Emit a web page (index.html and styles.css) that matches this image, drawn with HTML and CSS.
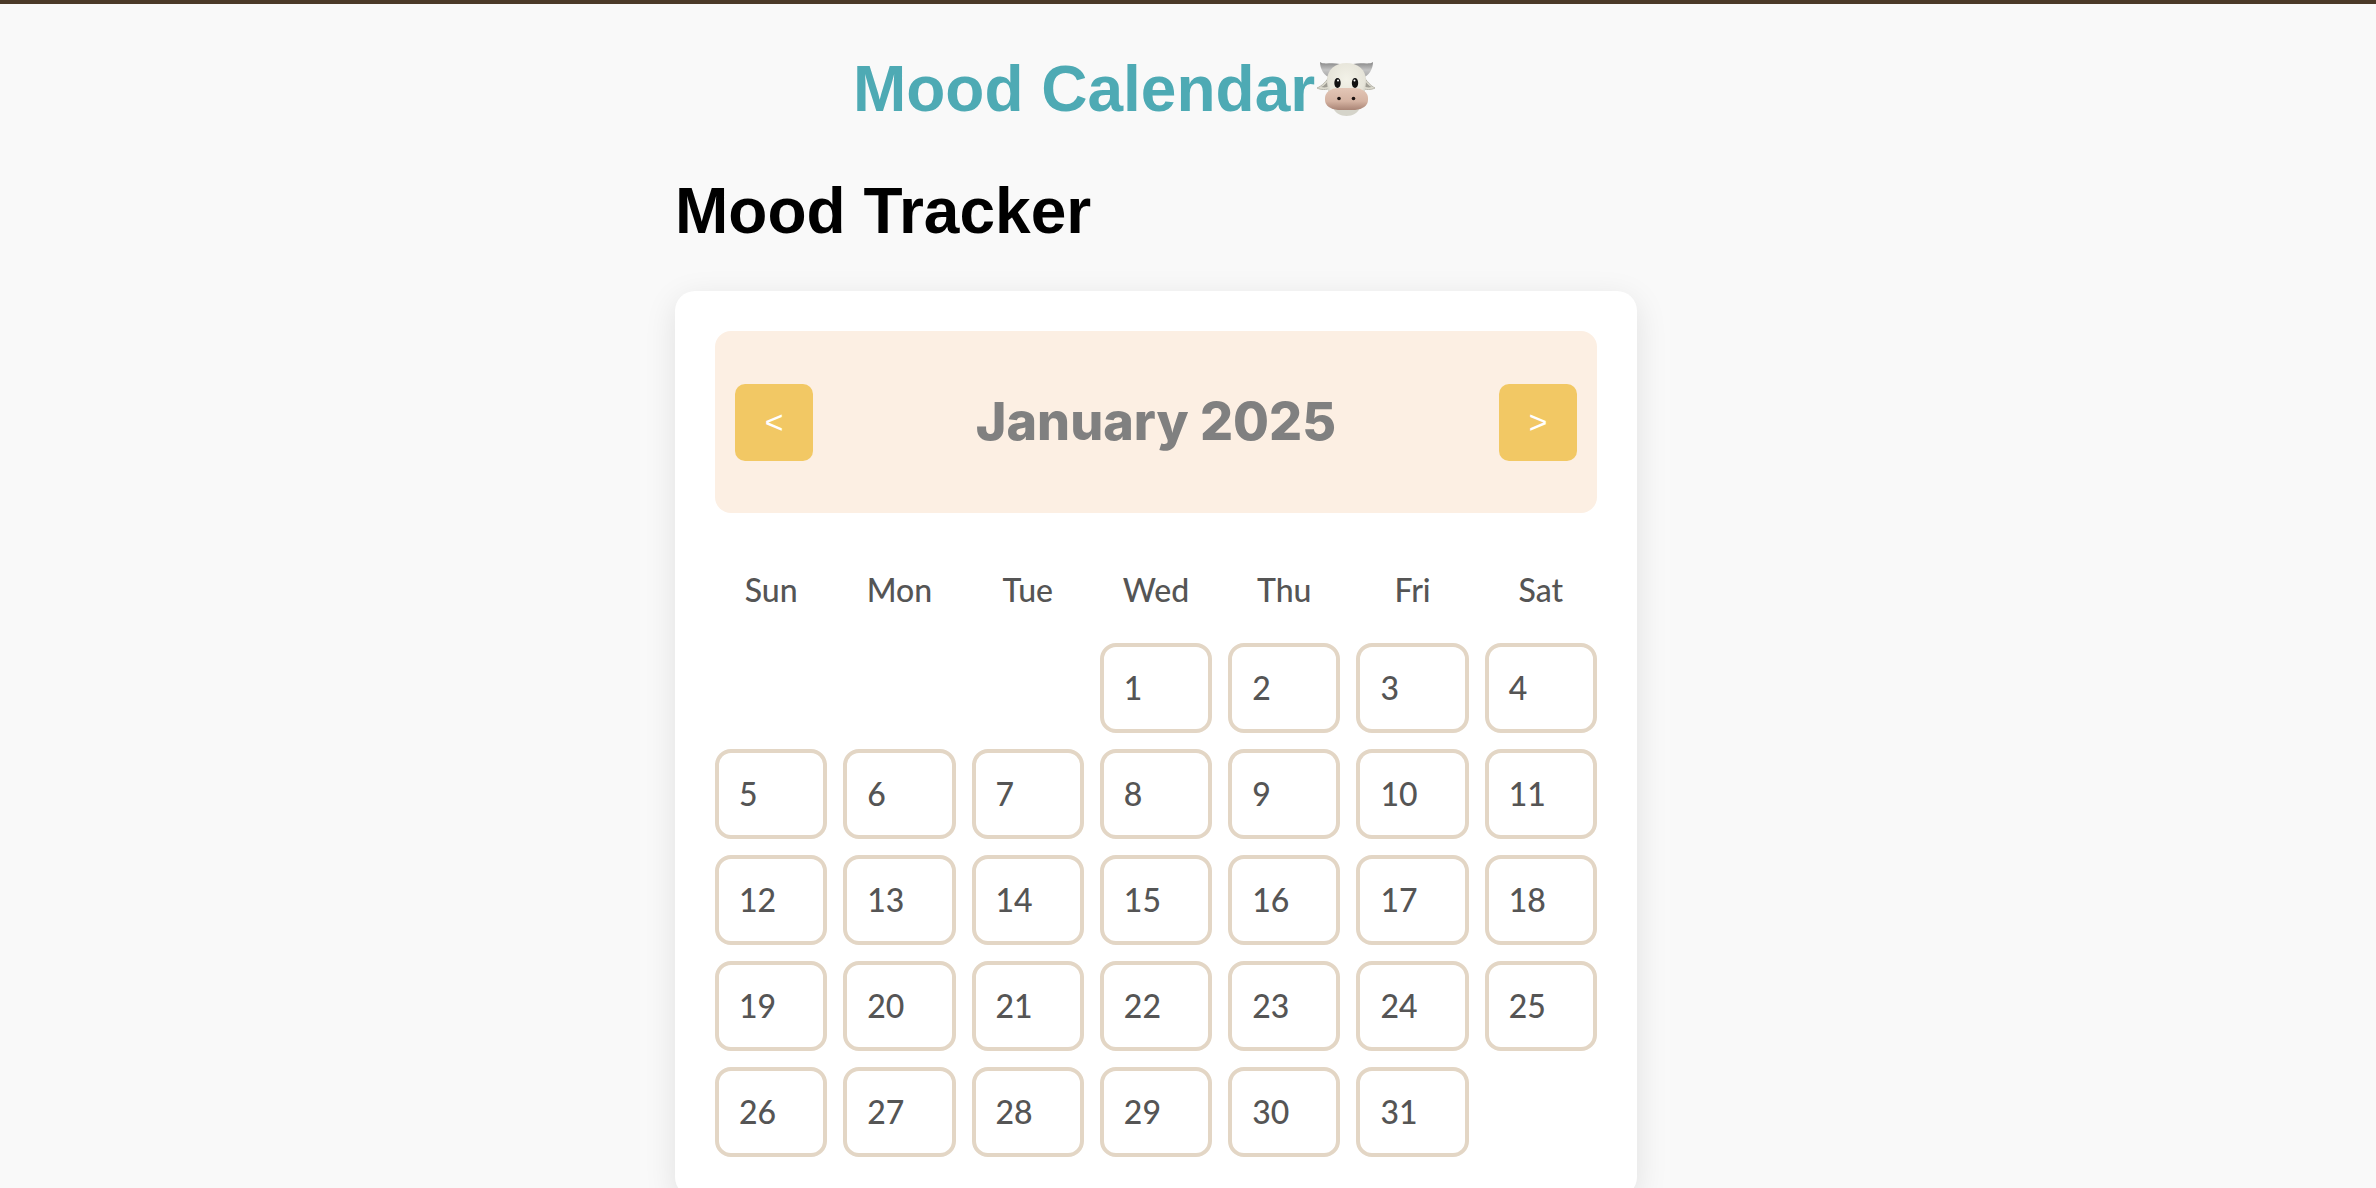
FILE: index.html
```html
<!DOCTYPE html>
<html lang="en">
<head>
<meta charset="utf-8">
<meta name="viewport" content="width=device-width, initial-scale=1">
<title>Mood Calendar</title>
<link rel="stylesheet" href="styles.css">
</head>
<body>
<main class="page">
  <h1 class="title brand">Mood Calendar<svg class="cow" viewBox="0 0 62 56" role="img" aria-label="Cow">
    <defs>
      <radialGradient id="face" cx=".5" cy=".4" r=".62"><stop offset="0" stop-color="#f3f2e8"/><stop offset=".75" stop-color="#e6e4d9"/><stop offset="1" stop-color="#c2c0b5"/></radialGradient>
      <linearGradient id="nose" x2="0" y2="1"><stop offset="0" stop-color="#e3c6b6"/><stop offset=".6" stop-color="#d5b3a2"/><stop offset="1" stop-color="#a98475"/></linearGradient>
      <linearGradient id="horn" x2="0" y2="1"><stop offset="0" stop-color="#858585"/><stop offset=".5" stop-color="#c4c4c4"/><stop offset="1" stop-color="#a4a4a4"/></linearGradient>
    </defs>
    <path fill="#dedcd0" stroke="#b8b6ac" d="M15 14C12 20 7 25 2 27c4 2 9 2 14 0zM48 14c3 6 8 11 12 13-4 2-9 2-14 0z"/>
    <path fill="#9f9d94" d="M15 17c-3 5-6 8-9 9 4 1 7 0 9-1zM48 17c3 5 6 8 9 9-4 1-7 0-9-1z"/>
    <path fill="url(#horn)" d="M5 1c4 3 11 0 20 2l-9 14C9 15 5 8 5 1zM58 1c-4 3-11 0-20 2l9 14c7-2 11-9 11-16z"/>
    <path fill="#d5d4ca" d="M18 46c3 12 24 12 27 0z"/>
    <path fill="url(#face)" d="M31.500 2C43 2 51 9 51 19c0 9-3 19-5 24H17c-2-5-5-15-5-24C12 9 20 2 31.500 2z"/>
    <rect x="10" y="27" width="43" height="22" rx="13" ry="10" fill="url(#nose)"/>
    <ellipse cx="22.500" cy="22" rx="3.200" ry="5" fill="#111"/><ellipse cx="40" cy="22" rx="3.200" ry="5" fill="#111"/>
    <circle cx="23" cy="19.500" r="1" fill="#fff"/><circle cx="39.500" cy="19.500" r="1" fill="#fff"/>
    <circle cx="24" cy="37.500" r="1.800" fill="#1b1210"/><circle cx="38.500" cy="37.500" r="1.800" fill="#1b1210"/>
  </svg></h1>
  <h1 class="title">Mood Tracker</h1>
  <section class="card">
    <header class="month-bar">
      <button class="nav" type="button" aria-label="Previous month">&lt;</button>
      <h2 class="month">January 2025</h2>
      <button class="nav" type="button" aria-label="Next month">&gt;</button>
    </header>
    <table class="days">
      <thead><tr><th>Sun</th><th>Mon</th><th>Tue</th><th>Wed</th><th>Thu</th><th>Fri</th><th>Sat</th></tr></thead>
      <tbody>
        <tr><td class="blank"></td><td class="blank"></td><td class="blank"></td><td>1</td><td>2</td><td>3</td><td>4</td></tr>
        <tr><td>5</td><td>6</td><td>7</td><td>8</td><td>9</td><td>10</td><td>11</td></tr>
        <tr><td>12</td><td>13</td><td>14</td><td>15</td><td>16</td><td>17</td><td>18</td></tr>
        <tr><td>19</td><td>20</td><td>21</td><td>22</td><td>23</td><td>24</td><td>25</td></tr>
        <tr><td>26</td><td>27</td><td>28</td><td>29</td><td>30</td><td>31</td><td class="blank"></td></tr>
      </tbody>
    </table>
  </section>
</main>
</body>
</html>
```
FILE: styles.css
```css
* { box-sizing: border-box; }

body {
  margin: 0;
  border-top: 4px solid #4b3a28;
  background: #f9f9f9;
  font-family: "Liberation Sans", Arial, sans-serif;
}

.page {
  max-width: 1026px;
  margin: 0 auto;
  padding: 43px 64px 40px 0;
}

.title {
  margin: 0 0 38px;
  font-size: 64px;
  line-height: 84px;
  color: #000;
}

.brand {
  display: flex;
  justify-content: center;
  align-items: center;
  padding-right: 82px;
  color: #4eaab4;
}

.cow {
  width: 62px;
  height: 56px;
}

.card {
  padding: 40px;
  border-radius: 20px;
  background: #fff;
  box-shadow: 0 8px 32px rgba(0, 0, 0, 0.1);
}

.month-bar {
  display: flex;
  justify-content: space-between;
  align-items: center;
  min-height: 182px;
  padding: 20px;
  border-radius: 16px;
  background: #fcefe3;
}

.nav {
  width: 78px;
  padding: 20px 0;
  border: 0;
  border-radius: 10px;
  background: #f2c864;
  color: #fff;
  font: 32px/37px "Liberation Sans", Arial, sans-serif;
}

.month {
  margin: 0;
  font: 800 52px/64px Futura, Inter, sans-serif;
  color: #808080;
}

.days {
  width: calc(100% + 32px);
  margin: 24px -16px -16px;
  border-spacing: 16px;
  table-layout: fixed;
  font: 500 32px/40px Futura, Lato, sans-serif;
  color: #555;
}

.days th {
  height: 74px;
  padding: 0;
  font-weight: 500;
}

.days td {
  height: 90px;
  padding: 0 20px;
  border: 4px solid #e3d6c5;
  border-radius: 16px;
}

.days .blank { border-color: transparent; }
```
